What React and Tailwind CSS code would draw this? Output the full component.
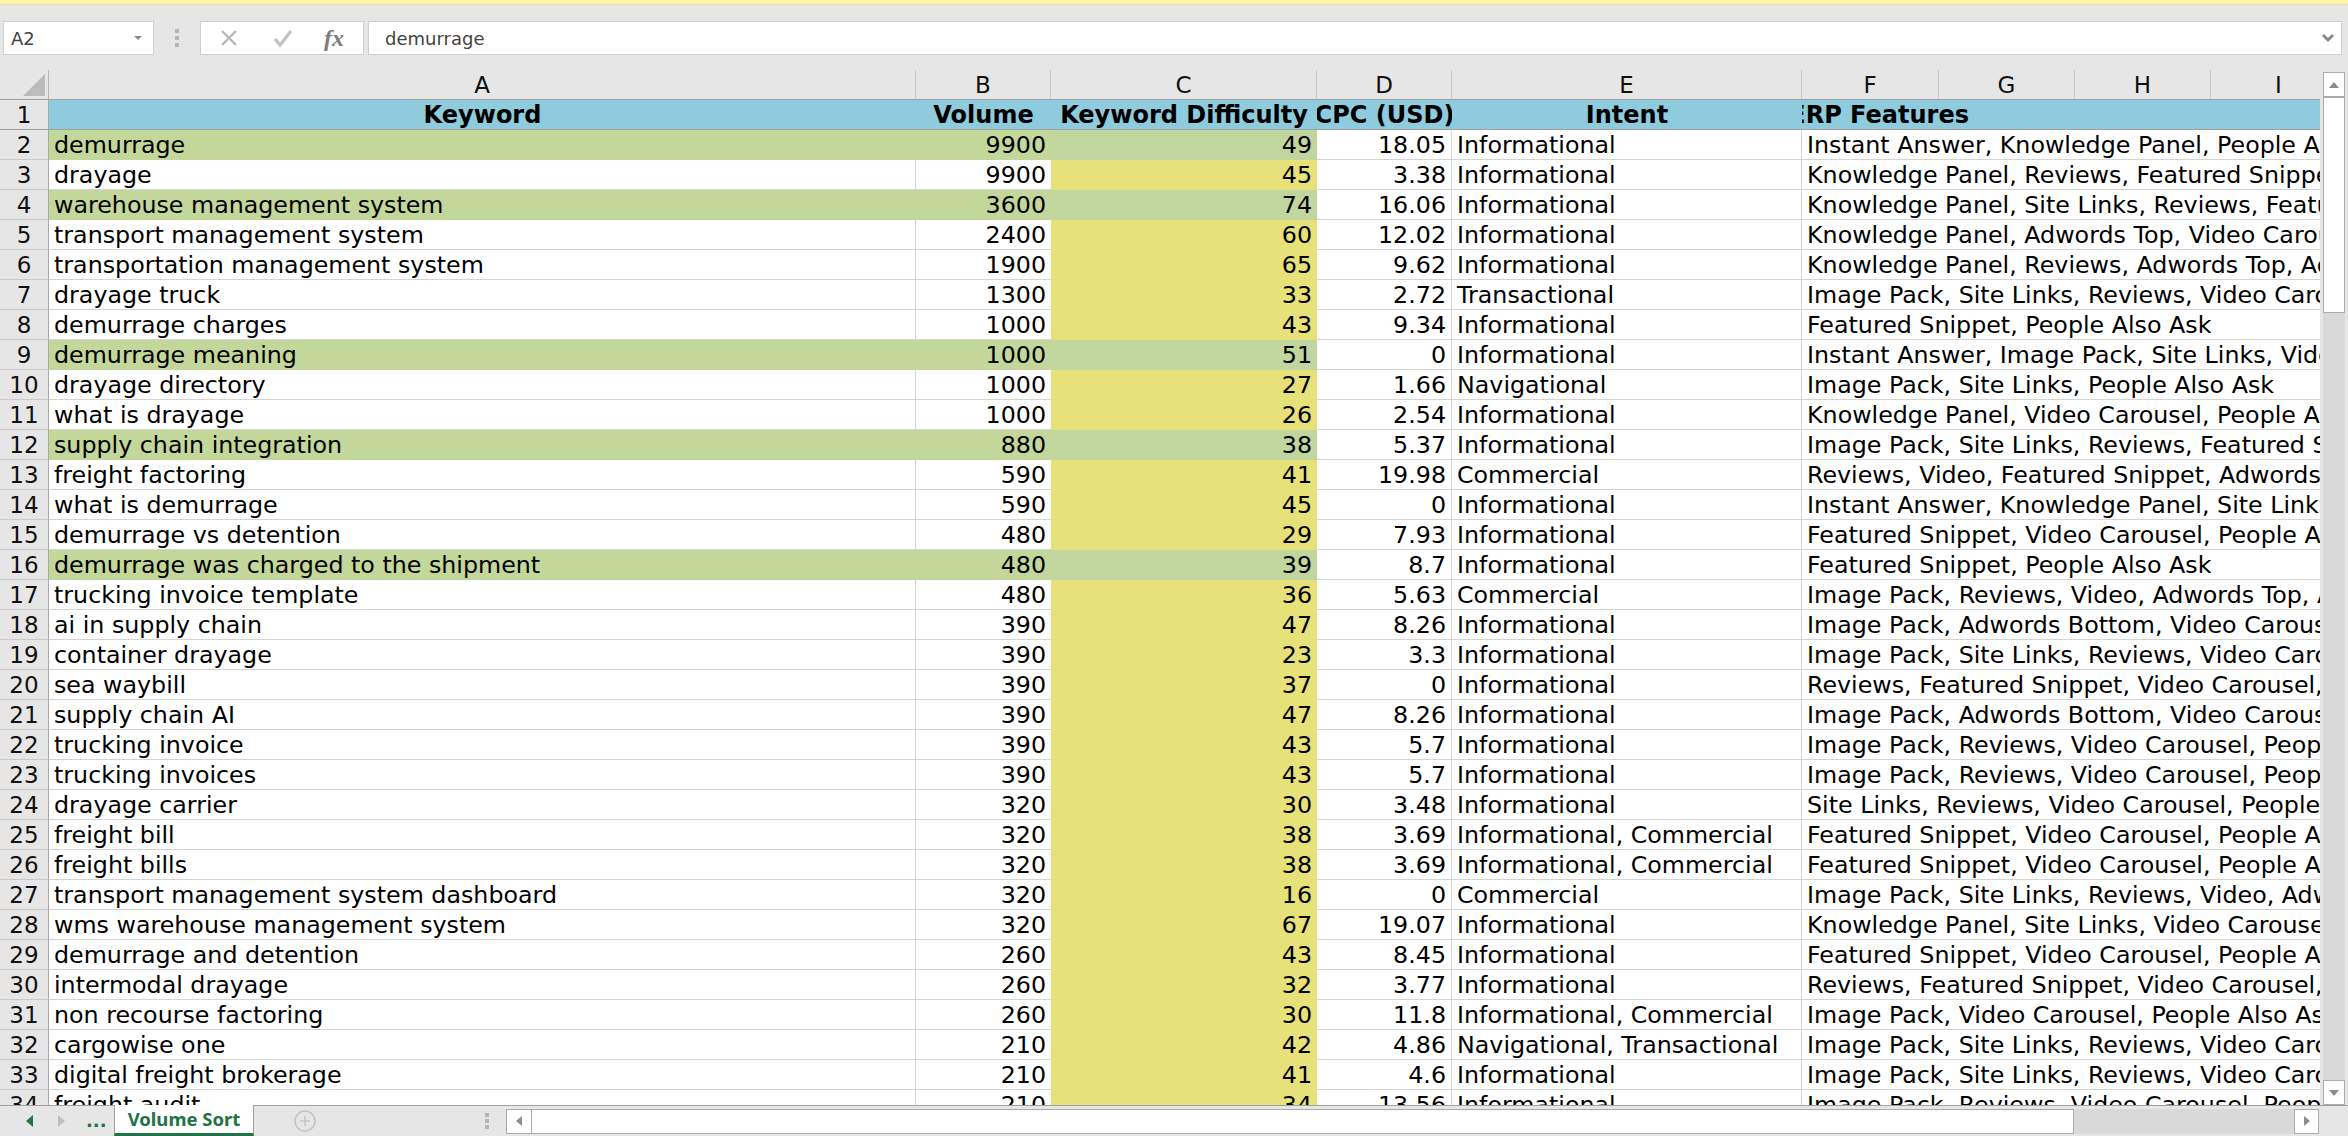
import React from "react";

const rows = [
  ["demurrage", 9900, 49, "18.05", "Informational", "Instant Answer, Knowledge Panel, People Also Ask", true],
  ["drayage", 9900, 45, "3.38", "Informational", "Knowledge Panel, Reviews, Featured Snippet, People Also Ask"],
  ["warehouse management system", 3600, 74, "16.06", "Informational", "Knowledge Panel, Site Links, Reviews, Featured Snippet", true],
  ["transport management system", 2400, 60, "12.02", "Informational", "Knowledge Panel, Adwords Top, Video Carousel, People Also Ask"],
  ["transportation management system", 1900, 65, "9.62", "Informational", "Knowledge Panel, Reviews, Adwords Top, Adwords Bottom"],
  ["drayage truck", 1300, 33, "2.72", "Transactional", "Image Pack, Site Links, Reviews, Video Carousel"],
  ["demurrage charges", 1000, 43, "9.34", "Informational", "Featured Snippet, People Also Ask"],
  ["demurrage meaning", 1000, 51, "0", "Informational", "Instant Answer, Image Pack, Site Links, Video Carousel", true],
  ["drayage directory", 1000, 27, "1.66", "Navigational", "Image Pack, Site Links, People Also Ask"],
  ["what is drayage", 1000, 26, "2.54", "Informational", "Knowledge Panel, Video Carousel, People Also Ask"],
  ["supply chain integration", 880, 38, "5.37", "Informational", "Image Pack, Site Links, Reviews, Featured Snippet", true],
  ["freight factoring", 590, 41, "19.98", "Commercial", "Reviews, Video, Featured Snippet, Adwords Top"],
  ["what is demurrage", 590, 45, "0", "Informational", "Instant Answer, Knowledge Panel, Site Links, Video"],
  ["demurrage vs detention", 480, 29, "7.93", "Informational", "Featured Snippet, Video Carousel, People Also Ask"],
  ["demurrage was charged to the shipment", 480, 39, "8.7", "Informational", "Featured Snippet, People Also Ask", true],
  ["trucking invoice template", 480, 36, "5.63", "Commercial", "Image Pack, Reviews, Video, Adwords Top, Adwords Bottom"],
  ["ai in supply chain", 390, 47, "8.26", "Informational", "Image Pack, Adwords Bottom, Video Carousel, People Also Ask"],
  ["container drayage", 390, 23, "3.3", "Informational", "Image Pack, Site Links, Reviews, Video Carousel"],
  ["sea waybill", 390, 37, "0", "Informational", "Reviews, Featured Snippet, Video Carousel, People Also Ask"],
  ["supply chain AI", 390, 47, "8.26", "Informational", "Image Pack, Adwords Bottom, Video Carousel, People Also Ask"],
  ["trucking invoice", 390, 43, "5.7", "Informational", "Image Pack, Reviews, Video Carousel, People Also Ask"],
  ["trucking invoices", 390, 43, "5.7", "Informational", "Image Pack, Reviews, Video Carousel, People Also Ask"],
  ["drayage carrier", 320, 30, "3.48", "Informational", "Site Links, Reviews, Video Carousel, People Also Ask"],
  ["freight bill", 320, 38, "3.69", "Informational, Commercial", "Featured Snippet, Video Carousel, People Also Ask"],
  ["freight bills", 320, 38, "3.69", "Informational, Commercial", "Featured Snippet, Video Carousel, People Also Ask"],
  ["transport management system dashboard", 320, 16, "0", "Commercial", "Image Pack, Site Links, Reviews, Video, Adwords Top"],
  ["wms warehouse management system", 320, 67, "19.07", "Informational", "Knowledge Panel, Site Links, Video Carousel, People Also Ask"],
  ["demurrage and detention", 260, 43, "8.45", "Informational", "Featured Snippet, Video Carousel, People Also Ask"],
  ["intermodal drayage", 260, 32, "3.77", "Informational", "Reviews, Featured Snippet, Video Carousel, People Also Ask"],
  ["non recourse factoring", 260, 30, "11.8", "Informational, Commercial", "Image Pack, Video Carousel, People Also Ask"],
  ["cargowise one", 210, 42, "4.86", "Navigational, Transactional", "Image Pack, Site Links, Reviews, Video Carousel"],
  ["digital freight brokerage", 210, 41, "4.6", "Informational", "Image Pack, Site Links, Reviews, Video Carousel"],
  ["freight audit", 210, 34, "13.56", "Informational", "Image Pack, Reviews, Video Carousel, People Also Ask"],
];

const columnHeads = [
  ["A", "w-[867px]"],
  ["B", "w-[135px]"],
  ["C", "w-[266px]"],
  ["D", "w-[135px]"],
  ["E", "w-[350px]"],
  ["F", "w-[137px]"],
  ["G", "w-[136px]"],
  ["H", "w-[136px]"],
  ["I", "w-[136px]"],
];

const gridCols = "grid grid-cols-[49px_867px_135px_266px_135px_350px_518px]";

const ScrollButton = ({ className, points }) => (
  <div className={`flex items-center justify-center bg-white border border-[#ababab] ${className}`}>
    <svg width="14" height="14" viewBox="0 0 14 14">
      <polygon points={points} fill="#8c8c8c" />
    </svg>
  </div>
);

const FormulaBar = () => (
  <div className="h-[65px] flex items-start pt-[16px] pl-[3px] pr-[6px] text-[#444]">
    <div className="w-[151px] h-[34px] bg-white border border-[#cfcfcf] flex items-center justify-between pl-[7px] pr-[10px] text-[18px]">
      <span>A2</span>
      <svg width="10" height="6" viewBox="0 0 10 6"><polygon points="1,1 9,1 5,5" fill="#8a8a8a" /></svg>
    </div>
    <div className="w-[46px] h-[34px] flex flex-col items-center justify-center gap-[3px]">
      <div className="w-[4px] h-[4px] bg-[#b5b5b5]" />
      <div className="w-[4px] h-[4px] bg-[#b5b5b5]" />
      <div className="w-[4px] h-[4px] bg-[#b5b5b5]" />
    </div>
    <div className="w-[164px] h-[34px] bg-white border border-[#cfcfcf] flex items-center pl-[18px]">
      <svg width="20" height="20" viewBox="0 0 20 20" className="mr-[33px]">
        <path d="M3 3 L17 17 M17 3 L3 17" stroke="#b9b9b9" strokeWidth="2.4" fill="none" />
      </svg>
      <svg width="22" height="20" viewBox="0 0 22 20" className="mr-[30px]">
        <path d="M3 11 L8 17 L19 3" stroke="#c4c4c4" strokeWidth="3.4" fill="none" />
      </svg>
      <span className="font-['Liberation_Serif',serif] italic font-bold text-[24px] leading-none text-[#7c7c7c]">fx</span>
    </div>
    <div className="ml-[4px] flex-1 h-[34px] bg-white border border-[#cfcfcf] flex items-center justify-between pl-[16px] pr-[6px] text-[18px]">
      <span>demurrage</span>
      <svg width="14" height="10" viewBox="0 0 14 10">
        <path d="M2 2 L7 7 L12 2" stroke="#8a8a8a" strokeWidth="3" fill="none" />
      </svg>
    </div>
  </div>
);

const ColumnHeader = () => (
  <div className="h-[29px] flex shrink-0 overflow-hidden border-b border-[#a0a0a0] box-content">
    <div className="w-[49px] shrink-0 border-r border-[#b5b5b5] flex items-end justify-end pr-[3px] pb-[3px]">
      <svg width="22" height="22" viewBox="0 0 22 22"><polygon points="22,0 22,22 0,22" fill="#bcbcbc" /></svg>
    </div>
    {columnHeads.map(([label, width]) => (
      <div key={label} className={`${width} shrink-0 h-full flex items-center justify-center pt-[2px] text-[23px] leading-none text-[#111] border-r border-[#c8c8c8]`}>
        {label}
      </div>
    ))}
  </div>
);

const TitleRow = () => (
  <div className={`${gridCols} grid-rows-[29px] h-[30px] border-b border-[#a0a0a0] text-[24px] leading-[31px] font-bold text-black`}>
    <div className="bg-[#e6e6e6] border-r border-[#a8a8a8] text-center font-normal text-[23px] text-[#111]">1</div>
    <div className="bg-[#8ecbdc] text-center">Keyword</div>
    <div className="bg-[#8ecbdc] text-center">Volume</div>
    <div className="bg-[#8ecbdc] text-center whitespace-nowrap overflow-hidden">Keyword Difficulty</div>
    <div className="bg-[#8ecbdc] flex justify-center whitespace-nowrap overflow-hidden">
      <span className="shrink-0">CPC (USD)</span>
    </div>
    <div className="bg-[#8ecbdc] text-center">Intent</div>
    <div className="bg-[#8ecbdc] overflow-hidden">
      <div className="w-[137px] flex justify-center">
        <span className="shrink-0 whitespace-nowrap">SERP Features</span>
      </div>
    </div>
  </div>
);

const DataRow = ({ row, index }) => {
  const [keyword, volume, difficulty, cpc, intent, features, marked] = row;
  const fill = marked ? "bg-[#c4d79b]" : "bg-white border-b border-[#d4d4d4]";
  return (
    <div className={`${gridCols} grid-rows-[30px] h-[30px] text-[23.75px] leading-[31px] text-black shrink-0`}>
      <div className="bg-[#e6e6e6] border-r border-b border-r-[#a8a8a8] border-b-[#c8c8c8] text-center text-[23px] text-[#111]">{index + 2}</div>
      <div className={`${fill} pl-[5px] whitespace-nowrap ${marked ? "" : "border-r border-r-[#d4d4d4]"}`}>{keyword}</div>
      <div className={`${fill} pr-[5px] text-right`}>{volume}</div>
      <div className={`${marked ? "bg-[#c1d59e]" : "bg-[#e6e178]"} pr-[5px] text-right`}>{difficulty}</div>
      <div className="bg-white border-b border-r border-[#d4d4d4] pr-[5px] text-right">{cpc}</div>
      <div className="bg-white border-b border-r border-[#d4d4d4] pl-[5px] whitespace-nowrap">{intent}</div>
      <div className="bg-white border-b border-[#d4d4d4] pl-[5px] whitespace-nowrap overflow-x-clip">{features}</div>
    </div>
  );
};

const VerticalScroll = () => (
  <div className="w-[28px] shrink-0 h-full pt-[2px] pl-[3px] pr-[3px] flex flex-col bg-[#e6e6e6]">
    <ScrollButton className="h-[25px] shrink-0" points="2,10 12,10 7,4" />
    <div className="flex-1 bg-[#d9d9d9] flex flex-col">
      <div className="h-[216px] bg-white border border-[#ababab]" />
    </div>
    <ScrollButton className="h-[25px] shrink-0" points="2,4 12,4 7,10" />
  </div>
);

const BottomBar = () => (
  <div className="h-[31px] shrink-0 flex items-stretch">
    <div className="w-[114px] shrink-0 border-t border-[#a0a0a0] flex items-center">
      <svg width="12" height="14" viewBox="0 0 12 14" className="ml-[23px]"><polygon points="10,1 10,13 3,7" fill="#217346" /></svg>
      <svg width="12" height="14" viewBox="0 0 12 14" className="ml-[21px]"><polygon points="2,1 2,13 9,7" fill="#bfbfbf" /></svg>
      <span className="ml-[18px] text-[#217346] font-bold text-[18px] leading-none">...</span>
    </div>
    <div className="w-[140px] shrink-0 bg-white border-x border-[#a0a0a0] border-b-[3px] border-b-[#217346] flex items-center justify-center text-[#217346] font-['Noto_Sans',sans-serif] font-bold text-[18.5px] leading-none whitespace-nowrap">
      Volume Sort
    </div>
    <div className="flex-1 border-t border-[#a0a0a0] flex items-center">
      <svg width="22" height="22" viewBox="0 0 22 22" className="ml-[40px]">
        <circle cx="11" cy="11" r="10" fill="none" stroke="#c4c4c4" strokeWidth="1.5" />
        <path d="M11 6 V16 M6 11 H16" stroke="#c4c4c4" strokeWidth="1.5" />
      </svg>
      <div className="ml-[169px] flex flex-col gap-[2px]">
        <div className="w-[4px] h-[4px] bg-[#b5b5b5]" />
        <div className="w-[4px] h-[4px] bg-[#b5b5b5]" />
        <div className="w-[4px] h-[4px] bg-[#b5b5b5]" />
      </div>
      <div className="ml-[17px] w-[1813px] h-[25px] flex">
        <ScrollButton className="w-[26px] shrink-0" points="10,2 10,12 4,7" />
        <div className="w-[1542px] bg-white border border-[#ababab] border-l-0" />
        <div className="flex-1 bg-[#d9d9d9]" />
        <ScrollButton className="w-[25px] shrink-0" points="4,2 4,12 10,7" />
      </div>
    </div>
  </div>
);

export default function App() {
  return (
    <div className="w-[2348px] h-[1136px] overflow-hidden flex flex-col bg-[#e6e6e6] font-['DejaVu_Sans',sans-serif]">
      <div className="h-[5px] shrink-0 bg-[#fdf3a9] border-b border-[#e3dcae]" />
      <FormulaBar />
      <div className="flex-1 flex min-h-0">
        <div className="w-[2320px] shrink-0 flex flex-col overflow-hidden">
          <ColumnHeader />
          <TitleRow />
          {rows.map((row, i) => (
            <DataRow key={i} row={row} index={i} />
          ))}
        </div>
        <VerticalScroll />
      </div>
      <BottomBar />
    </div>
  );
}
